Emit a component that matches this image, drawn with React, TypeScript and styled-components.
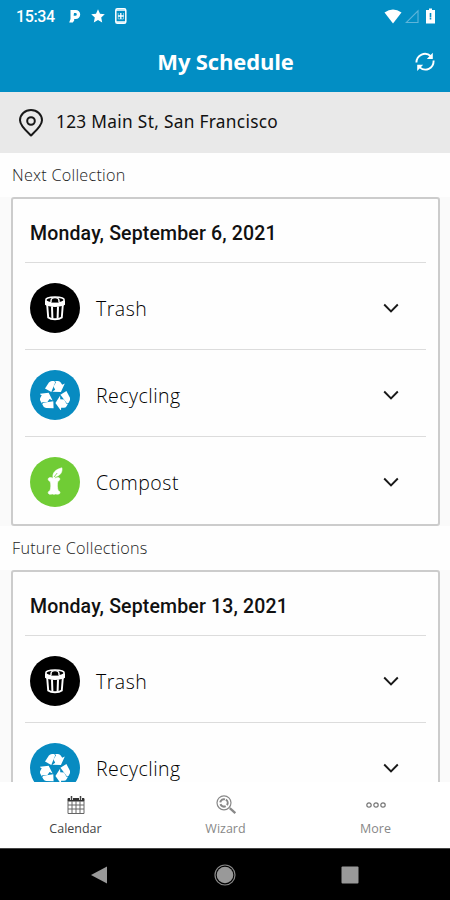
import React from 'react';
import styled, { createGlobalStyle } from 'styled-components';

const GlobalStyle = createGlobalStyle`
  *, *::before, *::after { box-sizing: border-box; }
  body { margin: 0; background: #fff; font-family: 'Open Sans', sans-serif; }
`;

const Screen = styled.div`
  width: 450px;
  height: 900px;
  display: flex;
  flex-direction: column;
  overflow: hidden;
  background: #fefefe;
`;

const StatusBar = styled.div`
  height: 32px;
  flex: none;
  display: flex;
  align-items: center;
  padding: 0 12px 0 16px;
  background: #028ec4;
  color: #fff;
`;

const Clock = styled.span`
  width: 53px;
  padding-top: 1px;
  font: 500 16px/31px Roboto, sans-serif;
  letter-spacing: -0.4px;
`;

const StatusIcons = styled.div`
  display: flex;
  align-items: center;
  gap: 10px;
  &:last-child { margin-left: auto; gap: 3px; }
`;

const TitleBar = styled.header`
  height: 60px;
  flex: none;
  display: grid;
  grid-template-columns: 50px 1fr 50px;
  align-items: center;
  justify-items: center;
  background: #028ec4;
  color: #fff;
`;

const Title = styled.h1`
  grid-column: 2;
  margin: 0;
  padding: 0 0 2px 1px;
  font-size: 22px;
  line-height: 58px;
  font-weight: 700;
  letter-spacing: -0.15px;
`;

const RefreshButton = styled.button`
  border: 0;
  padding: 0;
  background: none;
  color: inherit;
  display: flex;
`;

const AddressBar = styled.div`
  height: 61px;
  flex: none;
  display: flex;
  align-items: center;
  gap: 11px;
  padding: 0 17px 3px;
  background: #e9e9e9;
  color: #111;
  font-family: 'Noto Sans', sans-serif;
  font-size: 17.3px;
  letter-spacing: 0.3px;
  & > svg { margin-top: 3px; }
`;

const Content = styled.main`
  height: 629px;
  flex: none;
  overflow: hidden;
`;

const SectionLabel = styled.h2`
  height: 44px;
  margin: 0;
  padding-left: 12px;
  color: #222;
  font-size: 16.2px;
  font-weight: 300;
  line-height: 44px;
  letter-spacing: 0.25px;
`;

const CardGutter = styled.div`
  padding: 0 10px 0 11px;
  background: #fafafa;
`;

const Card = styled.section`
  height: 329px;
  padding: 0 12px;
  border: 2px solid #ccc;
  border-radius: 3px;
  background: #fefefe;
`;

const DateHeading = styled.h3`
  height: 63px;
  margin: 0;
  padding-left: 5px;
  color: #111;
  font: 500 19.5px/69px Roboto, sans-serif;
  letter-spacing: 0.16px;
`;

const PickupRow = styled.div`
  height: 87px;
  display: flex;
  align-items: center;
  padding: 4px 27px 0 5px;
  border-top: 1px solid #dcdcdc;
`;

const Badge = styled.span<{ $color: string }>`
  width: 50px;
  height: 50px;
  flex: none;
  border-radius: 50%;
  display: flex;
  align-items: center;
  justify-content: center;
  background: ${p => p.$color};
  color: #fff;
`;

const PickupName = styled.span`
  flex: 1;
  padding-left: 16px;
  color: #000;
  font-size: 19.5px;
  font-weight: 300;
  letter-spacing: 0.5px;
`;

const TabBar = styled.nav`
  height: 66px;
  flex: none;
  display: grid;
  grid-template-columns: repeat(3, 1fr);
  background: #fff;
`;

const Tab = styled.div<{ $active?: boolean }>`
  display: flex;
  flex-direction: column;
  align-items: center;
  padding: 13px 0 0 1px;
  color: ${p => (p.$active ? '#444' : '#888')};
  font-size: 12.5px;
  line-height: 18px;
  & > svg { margin-bottom: 5px; }
`;

const SystemNav = styled.div`
  flex: 1;
  display: grid;
  grid-template-columns: 198px 54px 196px;
  align-items: center;
  justify-items: center;
  background: #000;
  border-top: 1px solid #444;
`;

const ParkingIcon = () => (
  <svg width="12" height="14" viewBox="0 0 12 14">
    <path d="M1.5 1h5.2a4.4 4.4 0 0 1 0 9H5.2v1.5L3.8 13.5H.2L1.5 10z" fill="#fff" />
    <path d="M5 4h1.4a1.3 1.3 0 0 1 0 2.8H4.6z" fill="#028ec4" />
  </svg>
);

const StarIcon = () => (
  <svg width="14" height="14" viewBox="0 0 14 14">
    <path d="M7 .3l2 4.5 4.8.5-3.6 3.3 1 4.9L7 11 2.8 13.5l1-4.9L.2 5.3 5 4.8z" fill="#fff" />
  </svg>
);

const SaverIcon = () => (
  <svg width="12" height="18" viewBox="0 0 12 18">
    <rect x=".8" y="1.8" width="10" height="14.5" rx="1.6" fill="none" stroke="#fff" strokeWidth="1.5" />
    <path d="M1 3.2h10M1 15h10M5.8 6v6M3 9h5.7" stroke="#fff" strokeWidth="1.3" />
    <path d="M3.2 6v6h5.3V6" fill="none" stroke="#fff" strokeWidth=".7" opacity=".7" />
  </svg>
);

const WifiIcon = () => (
  <svg width="18" height="15" viewBox="0 0 18 15">
    <path d="M.5 3.4Q9-2.4 17.5 3.4L9 14.5z" fill="#fff" />
  </svg>
);

const SignalIcon = () => (
  <svg width="14" height="15" viewBox="0 0 14 15">
    <path d="M1.2 13.5H13V1.8z" fill="none" stroke="#5fb5da" strokeWidth="1.1" />
  </svg>
);

const BatteryIcon = () => (
  <svg width="16" height="16" viewBox="0 0 16 16">
    <path d="M5 2h2V.5h3V2h3v13.5H4V2z" fill="#fff" />
    <path d="M8.5 5v4.5M8.5 10v1.5" stroke="#028ec4" strokeWidth="1.6" />
  </svg>
);

const RefreshIcon = () => (
  <svg width="20" height="20" viewBox="0 0 20 20">
    <g fill="none" stroke="#fff" strokeWidth="1.9">
      <path d="M1.4 10.5C1.6 2.8 10.2-1 15.9 4.2" />
      <path d="M18.6 8.5c.3 7.9-8.3 12-14.2 6.6" />
    </g>
    <path d="M17.8.8v6.2h-6zM2.2 19v-6.2h6z" fill="#fff" />
  </svg>
);

const PinIcon = () => (
  <svg width="28" height="30" viewBox="0 0 28 30" fill="none" stroke="#181818" strokeWidth="2">
    <path d="M14 27.5C10.2 23.8 3 17.8 3 12.2a11 10.3 0 0 1 22 0c0 5.6-7.2 11.6-11 15.3z" strokeLinejoin="round" />
    <circle cx="14" cy="13" r="3.8" />
  </svg>
);

const TrashIcon = () => (
  <svg width="22" height="26" viewBox="0 0 22 26">
    <ellipse cx="11" cy="5" rx="9.2" ry="3" fill="none" stroke="#fff" strokeWidth="1.5" />
    <path d="M1 5v4.8C5 12.6 17 12.6 21 9.8V5C18 8.8 4 8.8 1 5z" fill="#fff" />
    <path d="M7 7.5V5.6c.4-4 7.6-4 8 0v1.9" fill="#000" stroke="#fff" strokeWidth="1.4" />
    <path d="M3.2 10l1 12.4c3 2.4 10.6 2.4 13.6 0l1-12.4" fill="none" stroke="#fff" strokeWidth="1.9" />
    <path d="M8 11.5l.4 12M14 11.5l-.4 12" stroke="#fff" strokeWidth="2" />
  </svg>
);

const RecyclingIcon = () => (
  <svg width="30" height="30" viewBox="0 0 30 30" fill="#fff">
    {[0, 120, 240].map(angle => (
      <g key={angle} transform={`rotate(${angle} 15 16)`}>
        <path d="M5 8.6L8.9 2.4Q10 .9 12 .9H14.3L15.2 2.4L11.3 11.9z" />
        <path d="M15 .9H18Q19.8 .9 20.7 2.4L22.2 4.8L24.8 3.4L20.9 12.1L12.3 11.7L15.2 9.8L13.5 6.4L16 2.2z" />
      </g>
    ))}
  </svg>
);

const AppleCoreIcon = () => (
  <svg width="18" height="30" viewBox="0 0 18 30">
    <path d="M7 10.5C6.2 6 9.5 2.4 15.9.8c.8 4.6-2 8.2-6.8 9l-.3 1.6c2-.9 4-1.2 4.8-.2.7 1.3-.3 2.4-1.8 3.3-.7 3.1-.6 6 .4 9.2 1.8.5 2.2 1.8 1.5 2.8-1 1-2.6.7-3.9.4-1.4.6-2.5.6-3.5 0-1.4.4-3.1.6-3.9-.5-.6-1.1.1-2.2 1.6-2.7 1-3.3 1.1-6 .2-9.2-1.7-.7-2.6-2.1-1.7-3.3 1.1-1.1 3-.7 4.5 0z" fill="#fff" stroke="#fff" strokeWidth=".6" />
    <path d="M8 10l3.2-4" stroke="#72cd38" strokeWidth=".8" />
  </svg>
);

const ChevronIcon = () => (
  <svg width="16" height="10" viewBox="0 0 16 10" fill="none" stroke="#181818" strokeWidth="1.9">
    <path d="M1.2 1.5L8 8.3l6.8-6.8" />
  </svg>
);

const CalendarIcon = () => (
  <svg width="18" height="20" viewBox="0 0 18 20" fill="none" stroke="#666">
    <path d="M1 3.5h16v2.5H1z" fill="#333" stroke="#333" />
    <path d="M1 6v12.5h16V6M1 10h16M1 14h16M5 6v12M9 6v12M13 6v12" strokeWidth="1" />
    <path d="M4.5 1v4M13.5 1v4" stroke="#fff" strokeWidth="3" />
    <path d="M4.5 1v4M13.5 1v4" stroke="#444" strokeWidth="1.5" />
  </svg>
);

const WizardIcon = () => (
  <svg width="22" height="20" viewBox="0 0 22 20" fill="none" stroke="#888">
    <circle cx="9" cy="7.8" r="7" strokeWidth="1.2" />
    <circle cx="9" cy="7.9" r="3.7" strokeWidth="2" strokeDasharray="6.2 1.55" transform="rotate(-60 9 7.9)" />
    <path d="M14.8 13.2l5.5 5" strokeWidth="2.3" />
  </svg>
);

const MoreIcon = () => (
  <svg width="20" height="20" viewBox="0 0 20 20" fill="none" stroke="#777" strokeWidth="1.2">
    <circle cx="3" cy="10" r="2.2" /><circle cx="10" cy="10" r="2.2" /><circle cx="17" cy="10" r="2.2" />
  </svg>
);

const trash = { name: 'Trash', color: '#000', icon: <TrashIcon /> };
const recycling = { name: 'Recycling', color: '#078bc1', icon: <RecyclingIcon /> };
const compost = { name: 'Compost', color: '#70cc35', icon: <AppleCoreIcon /> };

type Pickup = typeof trash;

const CollectionCard = ({ date, pickups }: { date: string; pickups: Pickup[] }) => (
  <CardGutter>
    <Card>
      <DateHeading>{date}</DateHeading>
      {pickups.map(p => (
        <PickupRow key={p.name}>
          <Badge $color={p.color}>{p.icon}</Badge>
          <PickupName>{p.name}</PickupName>
          <ChevronIcon />
        </PickupRow>
      ))}
    </Card>
  </CardGutter>
);

export default function App() {
  return (
    <Screen>
      <GlobalStyle />
      <StatusBar>
        <Clock>15:34</Clock>
        <StatusIcons><ParkingIcon /><StarIcon /><SaverIcon /></StatusIcons>
        <StatusIcons><WifiIcon /><SignalIcon /><BatteryIcon /></StatusIcons>
      </StatusBar>
      <TitleBar>
        <Title>My Schedule</Title>
        <RefreshButton aria-label="Refresh"><RefreshIcon /></RefreshButton>
      </TitleBar>
      <AddressBar><PinIcon /><span>123 Main St, San Francisco</span></AddressBar>
      <Content>
        <SectionLabel>Next Collection</SectionLabel>
        <CollectionCard date="Monday, September 6, 2021" pickups={[trash, recycling, compost]} />
        <SectionLabel>Future Collections</SectionLabel>
        <CollectionCard date="Monday, September 13, 2021" pickups={[trash, recycling]} />
      </Content>
      <TabBar>
        <Tab $active><CalendarIcon />Calendar</Tab>
        <Tab><WizardIcon />Wizard</Tab>
        <Tab><MoreIcon />More</Tab>
      </TabBar>
      <SystemNav>
        <svg width="18" height="20" viewBox="0 0 18 20"><path d="M1 10L17 1.5v17z" fill="#999" /></svg>
        <svg width="22" height="22" viewBox="0 0 22 22">
          <circle cx="11" cy="11" r="10" fill="none" stroke="#888" strokeWidth="1.2" />
          <circle cx="11" cy="11" r="8.3" fill="#999" />
        </svg>
        <svg width="18" height="18" viewBox="0 0 18 18"><rect x=".5" y=".5" width="17" height="17" rx="1" fill="#999" /></svg>
      </SystemNav>
    </Screen>
  );
}
